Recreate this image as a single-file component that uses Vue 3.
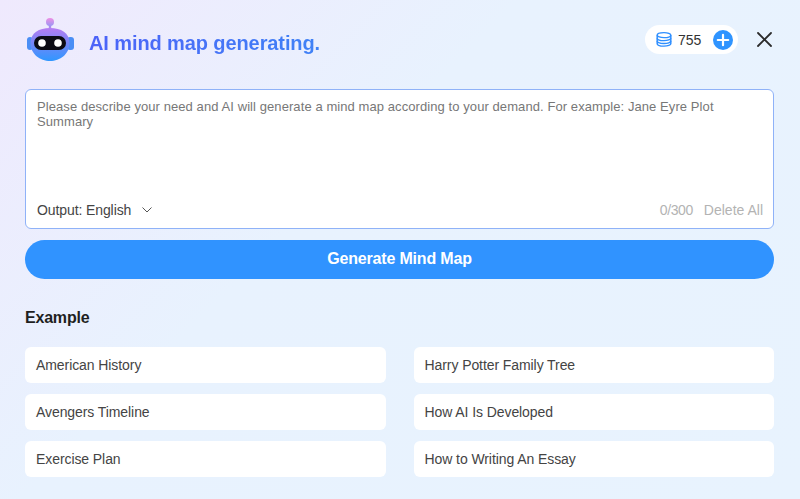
<script setup>
const examples = [
  'American History', 'Harry Potter Family Tree',
  'Avengers Timeline', 'How AI Is Developed',
  'Exercise Plan', 'How to Writing An Essay'
]
</script>

<template>
  <div class="page">
    <header class="head">
      <div class="brand">
        <svg class="bot" width="50" height="46" viewBox="0 0 50 46">
          <defs>
            <linearGradient id="botBody" x1="0" y1="0" x2="0" y2="1">
              <stop offset="0" stop-color="#b57cf2" />
              <stop offset="0.5" stop-color="#6f88f8" />
              <stop offset="1" stop-color="#2f97ff" />
            </linearGradient>
            <linearGradient id="botTop" x1="0" y1="0" x2="0" y2="1">
              <stop offset="0" stop-color="#ee8fe4" />
              <stop offset="1" stop-color="#9c96f4" />
            </linearGradient>
          </defs>
          <rect x="23.800" y="7" width="2.400" height="5" fill="#a98cf0" />
          <circle cx="25" cy="5" r="4" fill="url(#botTop)" />
          <rect x="2" y="20" width="6" height="13" rx="3" fill="#4a8ef5" />
          <rect x="42" y="20" width="7" height="13" rx="3" fill="#4a8ef5" />
          <path d="M5.500 26 C5.500 16 14 11 25 11 C36 11 44.500 16 44.500 26 C44.500 37 35 44 25 44 C15 44 5.500 37 5.500 26 Z" fill="url(#botBody)" />
          <rect x="9" y="19" width="32" height="14" rx="7" fill="#0b0b14" />
          <circle cx="17" cy="26" r="3.800" fill="#fff" />
          <circle cx="33" cy="26" r="3.800" fill="#fff" />
        </svg>
        <h1 class="title">AI mind map generating.</h1>
      </div>
      <div class="tools">
        <div class="credits">
          <svg width="16" height="15" viewBox="0 0 16 17" preserveAspectRatio="none" fill="none" stroke="#2f8fff" stroke-width="1.500">
            <ellipse cx="8" cy="3.600" rx="6.800" ry="2.800" />
            <path d="M1.200 3.600V13.200C1.200 14.800 4.200 16 8 16S14.800 14.800 14.800 13.200V3.600" />
            <path d="M1.200 7C1.200 8.600 4.200 9.800 8 9.800S14.800 8.600 14.800 7" />
            <path d="M1.200 10.200C1.200 11.800 4.200 13 8 13S14.800 11.800 14.800 10.200" />
          </svg>
          <span class="count">755</span>
          <svg width="20" height="20" viewBox="0 0 20 20">
            <circle cx="10" cy="10" r="10" fill="#2f94ff" />
            <path d="M10 4.800V15.200M4.800 10H15.200" stroke="#fff" stroke-width="2.200" stroke-linecap="round" />
          </svg>
        </div>
        <svg class="close" width="15" height="15" viewBox="0 0 15 15">
          <path d="M1 1L14 14M14 1L1 14" stroke="#2b2b2b" stroke-width="1.800" stroke-linecap="round" />
        </svg>
      </div>
    </header>

    <section class="box">
      <p class="hint">Please describe your need and AI will generate a mind map according to your demand. For example: Jane Eyre Plot Summary</p>
      <div class="box-foot">
        <div class="output">
          <span>Output: English</span>
          <svg width="10" height="6" viewBox="0 0 10 6" fill="none">
            <path d="M0.500 0.500L5 5L9.500 0.500" stroke="#555" stroke-width="1" />
          </svg>
        </div>
        <div class="meta">
          <span class="tally">0/300</span>
          <span>Delete All</span>
        </div>
      </div>
    </section>

    <button class="generate">Generate Mind Map</button>

    <h2 class="example">Example</h2>
    <div class="grid">
      <div v-for="item in examples" :key="item" class="card">{{ item }}</div>
    </div>
  </div>
</template>

<style>
html, body { margin: 0; padding: 0; }
</style>

<style scoped>
.page {
  width: 800px;
  height: 499px;
  box-sizing: border-box;
  padding: 17px 26px 0 25px;
  overflow: hidden;
  font-family: "Liberation Sans", Arial, sans-serif;
  background: linear-gradient(135deg, #efe9fd 0%, #e8f2fe 40%, #e8f3fe 100%);
}
.head {
  display: flex;
  justify-content: space-between;
  align-items: flex-start;
  height: 72px;
}
.brand {
  display: flex;
  align-items: center;
  gap: 14px;
}
.bot { flex: none; }
.title {
  margin: 6px 0 0;
  font-size: 20px;
  font-weight: 700;
  line-height: 40px;
  letter-spacing: -0.1px;
  color: #4a6cf7;
  background: linear-gradient(90deg, #4c62f8, #3f82f6);
  -webkit-background-clip: text;
  background-clip: text;
  -webkit-text-fill-color: transparent;
}
.tools {
  display: flex;
  align-items: center;
  gap: 19px;
  margin-top: 8px;
  margin-right: 2px;
}
.credits {
  display: flex;
  align-items: center;
  width: 93px;
  height: 29px;
  box-sizing: border-box;
  padding: 0 5px 0 11px;
  gap: 6px;
  border-radius: 15px;
  background: #fff;
}
.count {
  font-size: 14px;
  color: #333;
  flex: 1;
}
.box {
  box-sizing: border-box;
  height: 140px;
  display: flex;
  flex-direction: column;
  justify-content: space-between;
  padding: 9px 10px 9px 11px;
  background: #fff;
  border: 1px solid #8fb2f8;
  border-radius: 6px;
}
.hint {
  margin: 0;
  font-size: 13px;
  line-height: 15px;
  letter-spacing: 0.08px;
  color: #777;
}
.box-foot {
  display: flex;
  justify-content: space-between;
  align-items: center;
  font-size: 14px;
  line-height: 18px;
}
.output {
  display: flex;
  align-items: center;
  gap: 11px;
  color: #444;
  letter-spacing: -0.1px;
}
.meta {
  display: flex;
  gap: 11px;
  color: #b3b3b3;
}
.tally {
  letter-spacing: -0.4px;
}
.generate {
  display: block;
  width: 100%;
  height: 39px;
  margin-top: 11px;
  padding: 0 0 1px;
  border: none;
  border-radius: 20px;
  background: #3093ff;
  color: #fff;
  font-family: inherit;
  font-size: 16px;
  font-weight: 700;
  letter-spacing: -0.18px;
}
.example {
  margin: 30px 0 0;
  font-size: 16px;
  line-height: 18px;
  font-weight: 700;
  letter-spacing: -0.2px;
  color: #1f1f1f;
}
.grid {
  display: grid;
  grid-template-columns: 1fr 1fr;
  column-gap: 28px;
  row-gap: 11px;
  margin-top: 20px;
}
.card {
  height: 36px;
  line-height: 36px;
  padding: 0 11px;
  background: #fff;
  border-radius: 6px;
  font-size: 14px;
  letter-spacing: -0.08px;
  color: #444;
}
</style>
